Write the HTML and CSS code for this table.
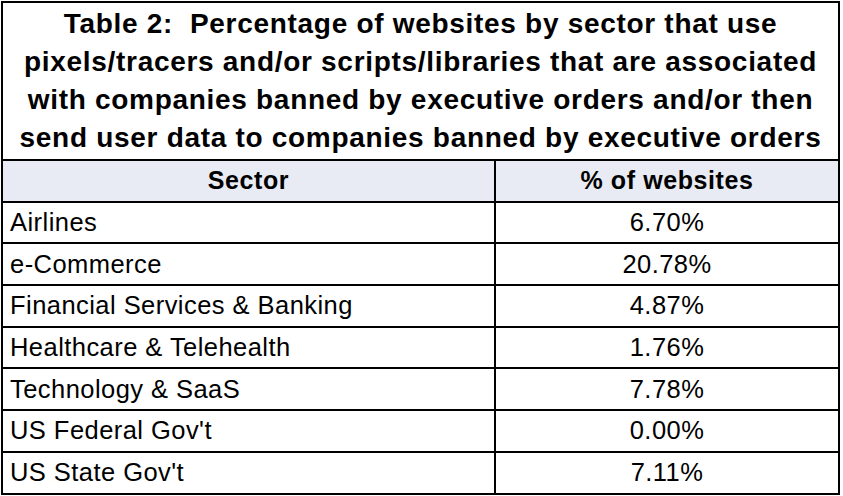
FILE: index.html
```html
<!DOCTYPE html>
<html>
<head>
<meta charset="utf-8">
<link rel="stylesheet" href="styles.css">
</head>
<body>
<table class="data-table">
  <colgroup>
    <col class="col-sector">
    <col class="col-pct">
  </colgroup>
  <thead>
    <tr class="title-row">
      <th colspan="2" class="title">Table 2:&nbsp; Percentage of websites by sector that use<br>pixels/tracers and/or scripts/libraries that are associated<br>with companies banned by executive orders and/or then<br>send user data to companies banned by executive orders</th>
    </tr>
    <tr class="head-row">
      <th>Sector</th>
      <th>% of websites</th>
    </tr>
  </thead>
  <tbody>
    <tr><td class="sector">Airlines</td><td class="pct">6.70%</td></tr>
    <tr><td class="sector">e-Commerce</td><td class="pct">20.78%</td></tr>
    <tr><td class="sector">Financial Services &amp; Banking</td><td class="pct">4.87%</td></tr>
    <tr><td class="sector">Healthcare &amp; Telehealth</td><td class="pct">1.76%</td></tr>
    <tr><td class="sector">Technology &amp; SaaS</td><td class="pct">7.78%</td></tr>
    <tr><td class="sector">US Federal Gov't</td><td class="pct">0.00%</td></tr>
    <tr><td class="sector">US State Gov't</td><td class="pct">7.11%</td></tr>
  </tbody>
</table>
</body>
</html>
```
FILE: styles.css
```css
html, body {
  margin: 0;
  padding: 0;
  background: #ffffff;
}

body {
  padding: 1px 0 0 1px;
  font-family: "Liberation Sans", Arial, sans-serif;
  color: #000;
}

.data-table {
  border-collapse: collapse;
  width: 839px;
  table-layout: fixed;
}

.col-sector {
  width: 493px;
}

.data-table th,
.data-table td {
  border: 2px solid #000;
  padding: 0;
}

.title {
  font-size: 28px;
  letter-spacing: 0.7px;
  font-weight: bold;
  line-height: 38px;
  height: 156px;
  text-align: center;
  vertical-align: middle;
}

.head-row th {
  background: #e8eaf4;
  font-size: 25px;
  letter-spacing: 0.6px;
  font-weight: bold;
  height: 39.7px;
  text-align: center;
}

.data-table td {
  font-size: 25.5px;
  letter-spacing: 0.45px;
  height: 39.7px;
}

.sector {
  text-align: left;
  padding-left: 7px !important;
}

.pct {
  text-align: center;
}
```
